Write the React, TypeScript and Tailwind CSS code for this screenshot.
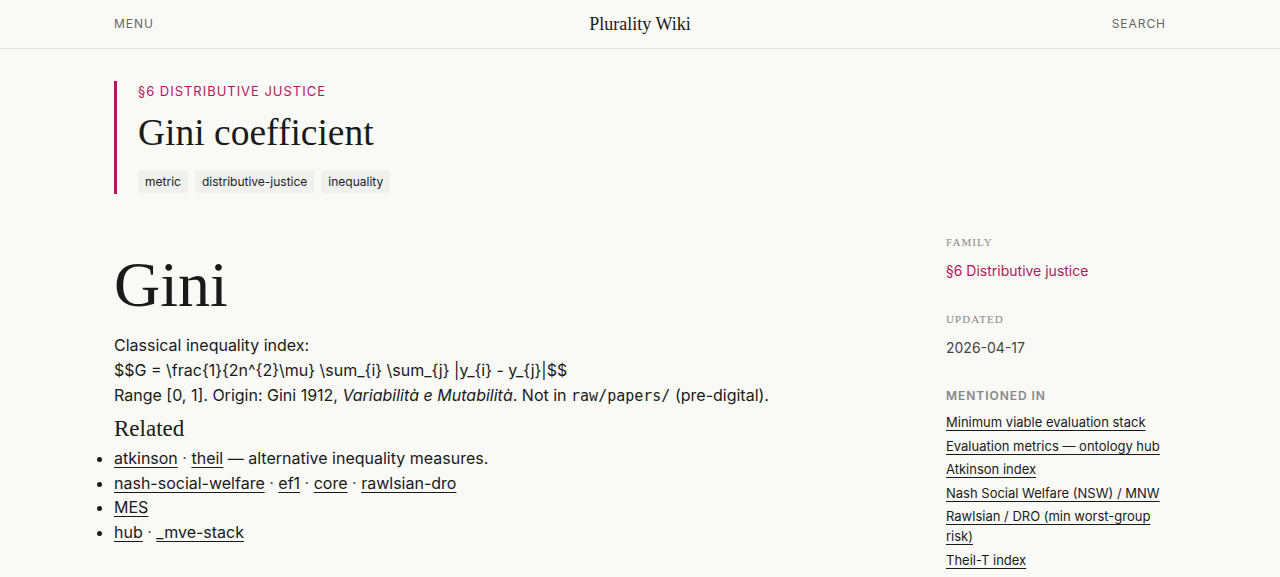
import React from 'react';

const serif = "font-['Liberation_Serif',serif]";
const sans = "font-['Inter',sans-serif]";

const mentions = [
  'Minimum viable evaluation stack',
  'Evaluation metrics — ontology hub',
  'Atkinson index',
  'Nash Social Welfare (NSW) / MNW',
  'Rawlsian / DRO (min worst-group risk)',
  'Theil-T index',
];

const Link = ({ children }: { children: React.ReactNode }) => (
  <a href="#" className="text-[#1a1a1a] underline underline-offset-[3px] decoration-[1px]">
    {children}
  </a>
);

const Dot = () => <span className="text-[#555]"> · </span>;

const App = () => {
  return (
    <div className={`min-h-screen bg-[#f9f9f6] text-[#1a1a1a] ${sans}`}>
      {/* Top bar */}
      <header className="h-[49px] border-b border-[#e4e4df]">
        <div className="mx-[114px] h-full grid grid-cols-3 items-center">
          <span className="text-[12px] tracking-[0.08em] text-[#666] justify-self-start">MENU</span>
          <span className={`${serif} text-[18px] text-[#1a1a1a] justify-self-center`}>Plurality Wiki</span>
          <span className="text-[12px] tracking-[0.08em] text-[#666] justify-self-end">SEARCH</span>
        </div>
      </header>

      <div className="mx-[114px]">
        {/* Page title block */}
        <div className="mt-[32px] border-l-[3px] border-[#b0195b] pl-[21px] pb-[1px]">
          <div className="text-[13px] leading-5 tracking-[0.075em] text-[#b5175a]">§6 DISTRIBUTIVE JUSTICE</div>
          <h1 className={`${serif} text-[37.5px] leading-[52px] mt-[6px] text-[#1a1a1a]`}>Gini coefficient</h1>
          <div className="flex gap-[7px] mt-[11px]">
            {['metric', 'distributive-justice', 'inequality'].map((t) => (
              <span key={t} className="bg-[#f0f0ee] text-[12px] leading-[23px] px-[7px] rounded-[2px] text-[#222]">
                {t}
              </span>
            ))}
          </div>
        </div>

        <div className="flex justify-between mt-[32px]">
          {/* Article body */}
          <main className="flex-1">
            <h2 className={`${serif} text-[64px] leading-[76px] mt-[21px]`}>Gini</h2>
            <div className="text-[16px] leading-[25px] mt-[10px] text-[#1a1a1a]">
              <p>Classical inequality index:</p>
              <p>$$G = \frac{'{1}{2n^{2}\\mu}'} \sum_{'{i}'} \sum_{'{j}'} |y_{'{i}'} - y_{'{j}'}|$$</p>
              <p>
                Range [0, 1]. Origin: Gini 1912, <em>Variabilità e Mutabilità</em>. Not in{' '}
                <code className="font-['DejaVu_Sans_Mono',monospace] text-[15px]">raw/papers/</code> (pre-digital).
              </p>
            </div>
            <h3 className={`${serif} text-[23px] leading-[30px] mt-[5px]`}>Related</h3>
            <ul className="list-disc pl-0 text-[16px] leading-[24.7px] mt-[2px]">
              <li>
                <Link>atkinson</Link><Dot /><Link>theil</Link> — alternative inequality measures.
              </li>
              <li>
                <Link>nash-social-welfare</Link><Dot /><Link>ef1</Link><Dot /><Link>core</Link><Dot /><Link>rawlsian-dro</Link>
              </li>
              <li>
                <Link>MES</Link>
              </li>
              <li>
                <Link>hub</Link><Dot /><Link>_mve-stack</Link>
              </li>
            </ul>
          </main>

          {/* Sidebar */}
          <aside className="w-[220px] pt-[8px]">
            <div className={`${serif} text-[11px] tracking-[0.1em] text-[#888]`}>FAMILY</div>
            <div className="text-[14px] text-[#b5175a] mt-[9px]">§6 Distributive justice</div>
            <div className={`${serif} text-[11px] tracking-[0.1em] text-[#888] mt-[30px]`}>UPDATED</div>
            <div className="text-[14px] text-[#444] mt-[10px]">2026-04-17</div>
            <div className="text-[12px] font-semibold tracking-[0.08em] text-[#888] mt-[29px]">MENTIONED IN</div>
            <ul className="mt-[7px] flex flex-col gap-[3.5px] text-[13px] leading-[20px]">
              {mentions.map((m) => (
                <li key={m}>
                  <Link>{m}</Link>
                </li>
              ))}
            </ul>
          </aside>
        </div>
      </div>
    </div>
  );
};

export default App;
